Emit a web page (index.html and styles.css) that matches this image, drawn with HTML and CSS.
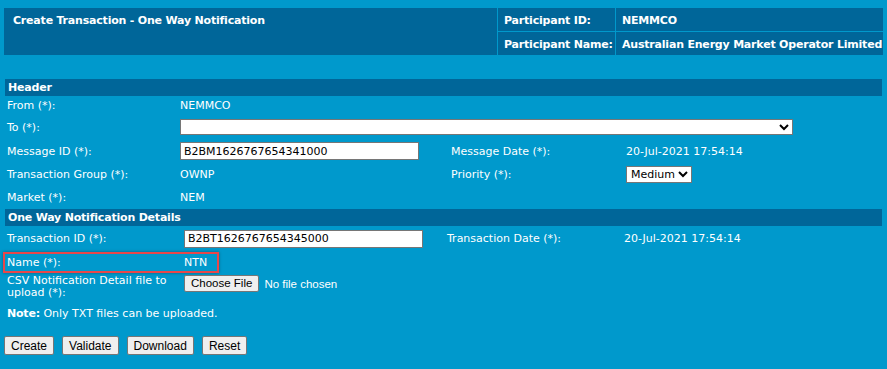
FILE: index.html
```html
<!DOCTYPE html>
<html lang="en">
<head>
    <meta charset="UTF-8">
    <title>Create Transaction - One Way Notification</title>
    <link rel="stylesheet" href="styles.css">
</head>
<body>
    <div class="banner">
        <div class="banner-title">Create Transaction - One Way Notification</div>
        <div class="banner-label">Participant ID:</div>
        <div class="banner-value">NEMMCO</div>
        <div class="banner-label">Participant Name:</div>
        <div class="banner-value">Australian Energy Market Operator Limited</div>
    </div>

    <form class="tx-form">
        <div class="section-bar">Header</div>
        <div class="rows rows-header">
            <div class="row r-from">
                <span class="lbl">From (*):</span>
                <span class="val">NEMMCO</span>
            </div>
            <div class="row r-to">
                <span class="lbl">To (*):</span>
                <select class="sel-to"><option></option></select>
            </div>
            <div class="row r-msg">
                <span class="lbl">Message ID (*):</span>
                <input type="text" class="txt" value="B2BM1626767654341000">
                <span class="lbl">Message Date (*):</span>
                <span class="val">20-Jul-2021 17:54:14</span>
            </div>
            <div class="row r-grp">
                <span class="lbl">Transaction Group (*):</span>
                <span class="val">OWNP</span>
                <span class="lbl">Priority (*):</span>
                <span><select class="sel-prio"><option>Medium</option></select></span>
            </div>
            <div class="row r-mkt">
                <span class="lbl">Market (*):</span>
                <span class="val">NEM</span>
            </div>
        </div>

        <div class="section-bar">One Way Notification Details</div>
        <div class="rows rows-detail">
            <div class="row r-tx">
                <span class="lbl">Transaction ID (*):</span>
                <input type="text" class="txt" value="B2BT1626767654345000">
                <span class="lbl">Transaction Date (*):</span>
                <span class="val">20-Jul-2021 17:54:14</span>
            </div>
            <div class="row r-name">
                <span class="lbl">Name (*):</span>
                <span class="val">NTN</span>
                <div class="highlight"></div>
            </div>
            <div class="row r-csv">
                <span class="lbl">CSV Notification Detail file to upload (*):</span>
                <span class="file-pick"><span class="file-btn">Choose File</span> No file chosen</span>
            </div>
            <div class="row r-note">
                <span class="note"><b>Note:</b> Only TXT files can be uploaded.</span>
            </div>
        </div>

        <div class="actions">
            <button type="submit">Create</button>
            <button type="button">Validate</button>
            <button type="button">Download</button>
            <button type="reset">Reset</button>
        </div>
    </form>
</body>
</html>
```

FILE: styles.css
```css
body {
    margin: 0;
    padding: 8px 4px;
    background-color: #0099cc;
    color: #fff;
    font-family: 'DejaVu Sans', Verdana, sans-serif;
    font-size: 11px;
}

b {
    letter-spacing: -0.2px;
}

/* top banner */
.banner {
    display: grid;
    grid-template-columns: 493px 117px 1fr;
    grid-template-rows: 23px 23px;
    gap: 1px;
}

.banner > div {
    background-color: #006699;
    font-weight: bold;
    letter-spacing: -0.2px;
    white-space: nowrap;
    display: flex;
    align-items: center;
    padding-top: 1px;
    box-sizing: border-box;
}

.banner-title {
    grid-row: 1 / 3;
    align-items: flex-start !important;
    padding: 6px 9px 0 !important;
}

.banner-label {
    padding-left: 6px;
}

.banner-value {
    padding-left: 6px;
}

/* form */
.tx-form {
    margin: 24px 1px 0;
}

.section-bar {
    background-color: #006699;
    font-weight: bold;
    letter-spacing: -0.2px;
    height: 17px;
    line-height: 18px;
    padding-left: 3px;
}

.rows {
    padding-left: 2px;
}

.row {
    display: grid;
    align-items: center;
    position: relative;
}

.rows-header .row {
    grid-template-columns: 173px 271px 175px auto;
}

.rows-detail .row {
    grid-template-columns: 177px 263px 177px auto;
}

.r-from { height: 18px; }
.r-to { height: 26px; }
.r-msg { height: 22px; }
.r-grp { height: 24px; }
.r-mkt { height: 23px; }

.r-tx { height: 25px; }
.r-name { height: 22px; }
.r-csv { height: 29px; align-items: start !important; padding-top: 2px; box-sizing: border-box; }
.r-note { height: 22px; }

.sel-to {
    grid-column: 2 / 5;
    width: 613px;
    height: 16px;
    border: 1px solid #767676;
    border-radius: 0;
    background: #fff;
    font-size: 11px;
}

.sel-prio {
    width: 66px;
    height: 17px;
    border: 1px solid #767676;
    border-radius: 0;
    background: #fff;
    color: #000;
    font-family: 'DejaVu Sans', Verdana, sans-serif;
    font-size: 11px;
    padding: 0;
}

.txt {
    width: 239px;
    height: 18px;
    box-sizing: border-box;
    border: 1px solid #767676;
    padding: 0 3px;
    font-family: 'DejaVu Sans', Verdana, sans-serif;
    font-size: 11px;
    color: #000;
}

.r-csv .lbl {
    width: 160px;
    line-height: 12px;
}

.file-pick {
    display: flex;
    align-items: center;
    gap: 5px;
    font-family: 'Liberation Sans', Arial, sans-serif;
    font-size: 11.5px;
}

.file-btn {
    display: inline-block;
    height: 17px;
    line-height: 15px;
    box-sizing: border-box;
    padding: 0 6px;
    background-color: #efefef;
    color: #000;
    border: 1px solid #767676;
    border-radius: 2px;
}

.note {
    grid-column: 1 / 5;
}

.highlight {
    position: absolute;
    left: -4px;
    top: 1px;
    width: 212px;
    height: 17px;
    border: 2px solid #e8474a;
    box-shadow: 0 0 3px rgba(0, 0, 0, 0.35);
}

/* buttons */
.actions {
    display: flex;
    gap: 8px;
    margin-top: 12px;
    margin-left: -1px;
}

.actions button {
    height: 19px;
    padding: 0 6px;
    background-color: #efefef;
    color: #000;
    border: 1px solid #767676;
    border-radius: 2px;
    font-family: 'Liberation Sans', Arial, sans-serif;
    font-size: 12px;
}
```
